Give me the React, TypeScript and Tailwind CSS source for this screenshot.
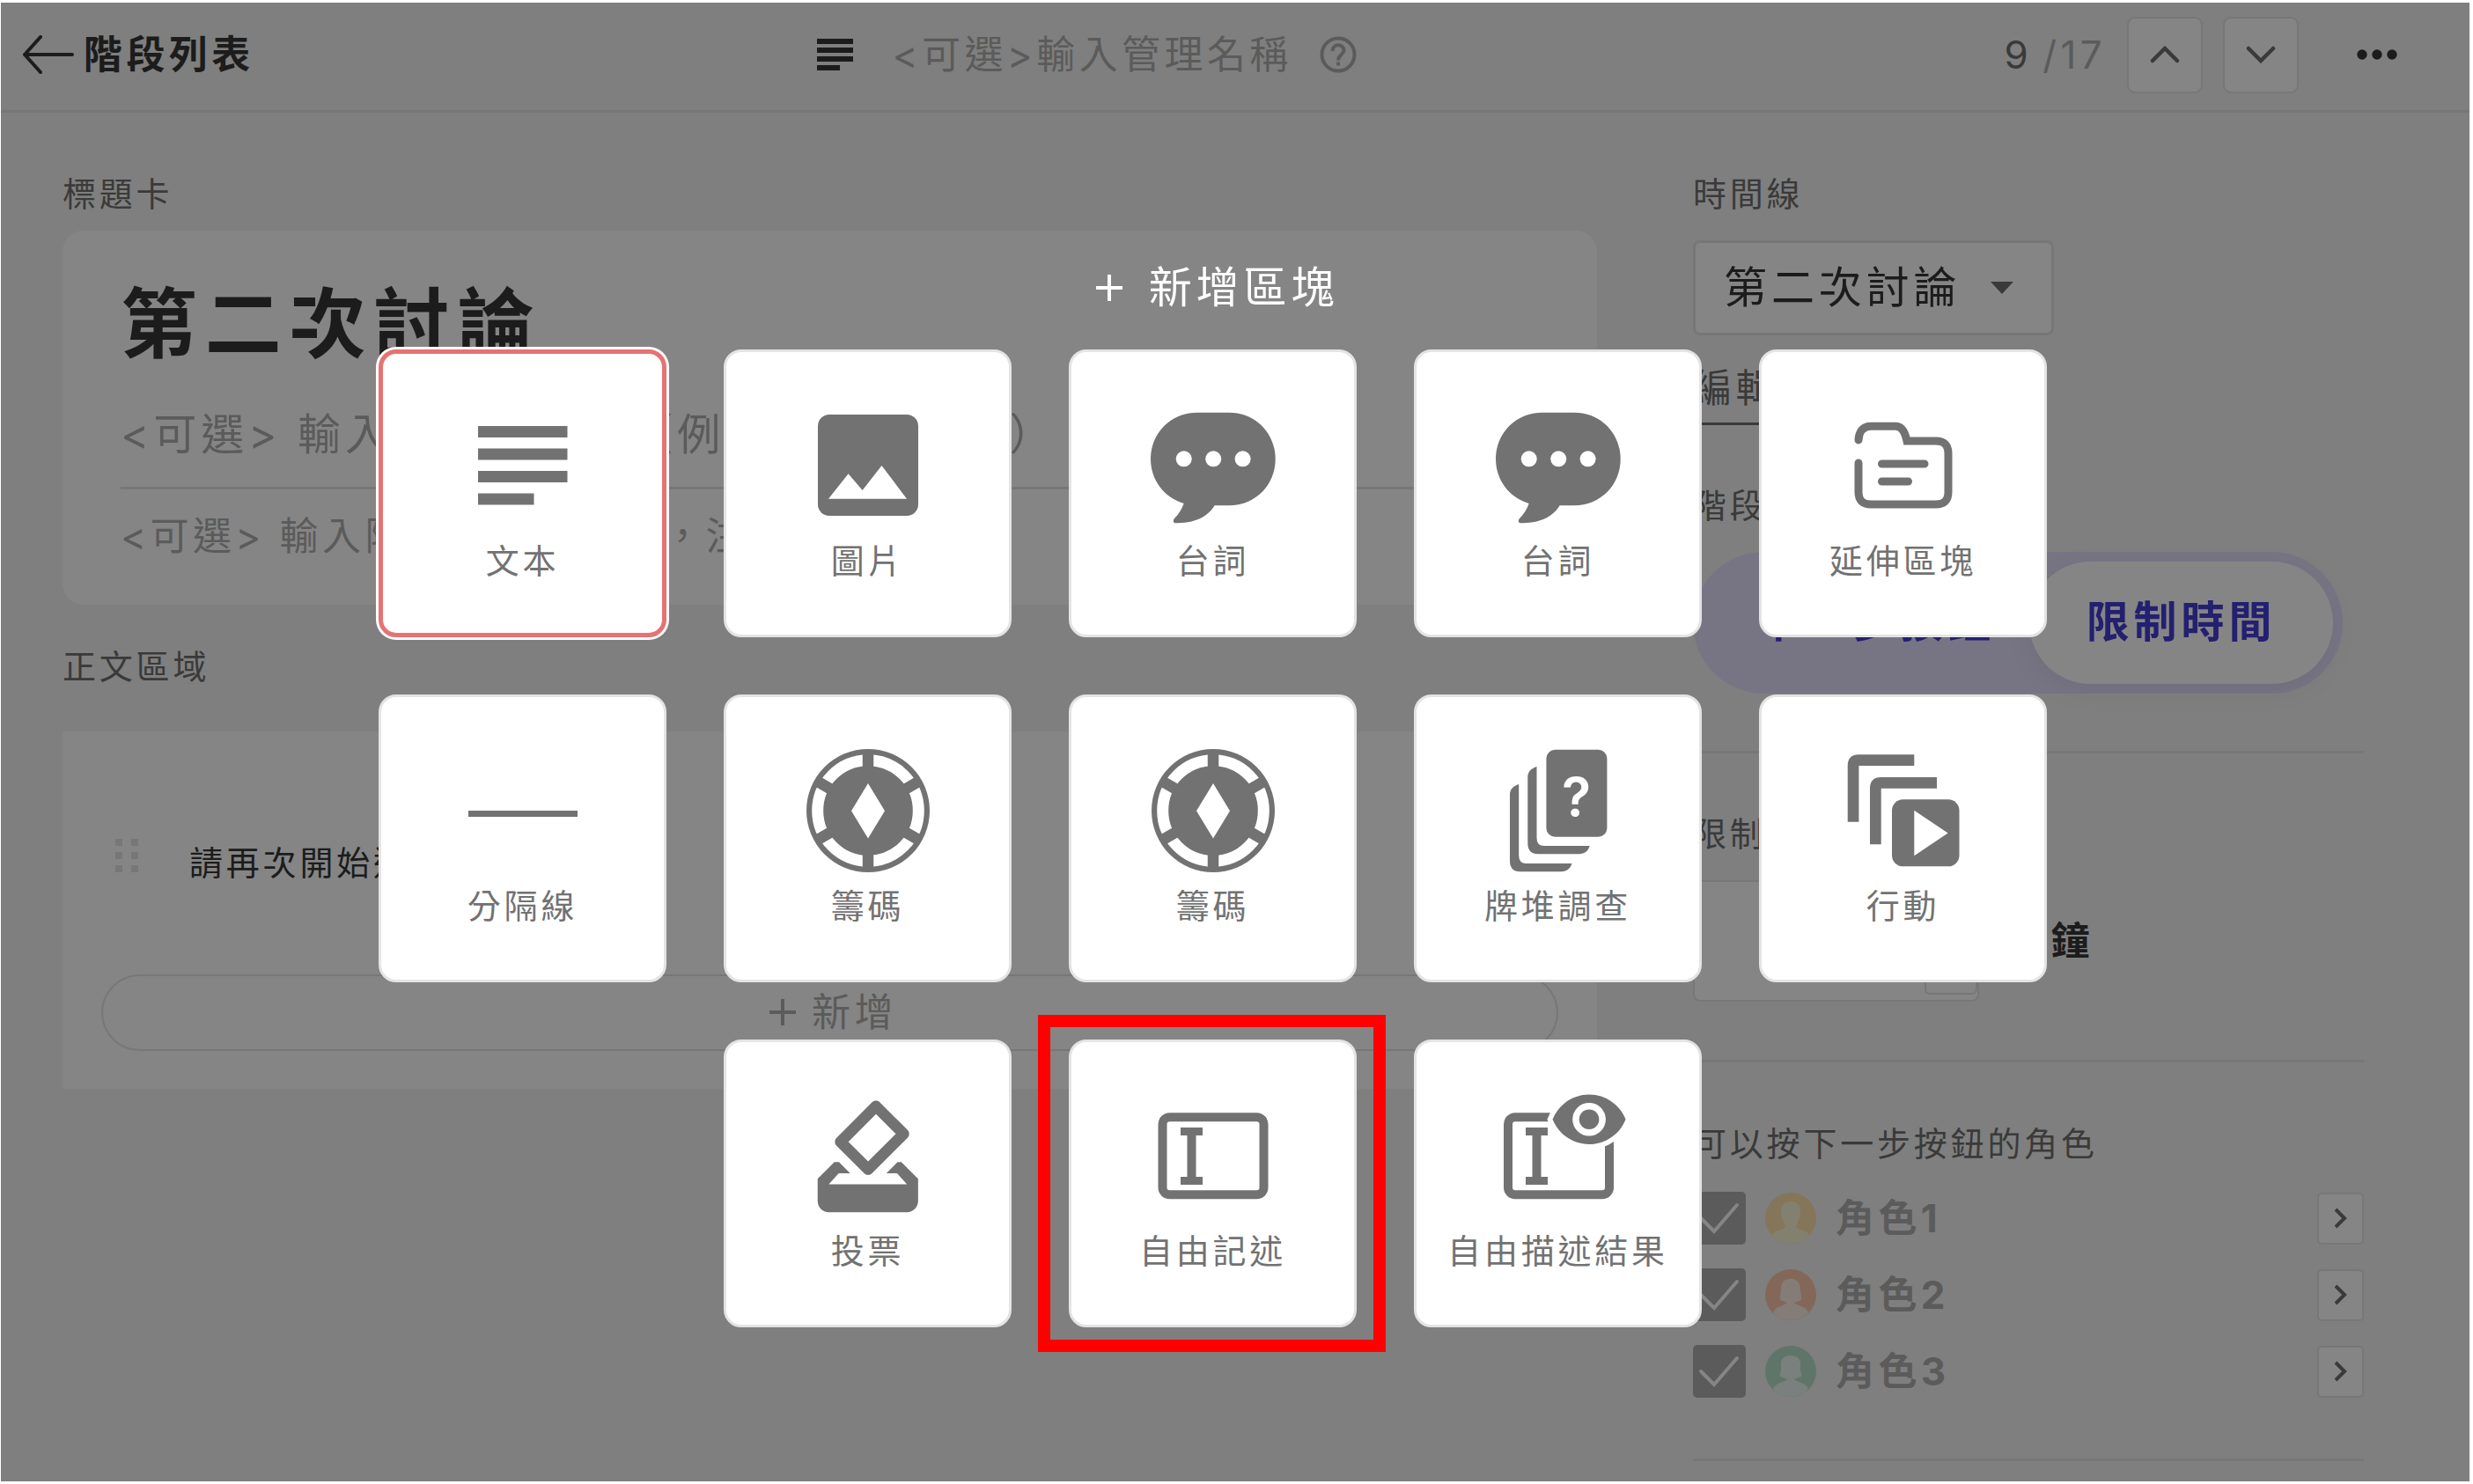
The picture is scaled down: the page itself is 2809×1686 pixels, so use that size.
import React from "react";

type IconProps = { children: React.ReactNode };

function BlockIcon({ children }: IconProps) {
  return (
    <svg viewBox="0 0 150 150" className="h-[150px] w-[150px] overflow-visible text-[#727272]" fill="currentColor" aria-hidden="true">
      {children}
    </svg>
  );
}

const TextIcon = () => (
  <BlockIcon>
    <rect x="24" y="30" width="101.5" height="13" />
    <rect x="24" y="55.5" width="101.5" height="13" />
    <rect x="24" y="81" width="101.5" height="13" />
    <rect x="24" y="106.5" width="63.5" height="13" />
  </BlockIcon>
);

const ImageIcon = () => (
  <BlockIcon>
    <rect x="18" y="17" width="114" height="115" rx="13" />
    <path d="M30 112.7 52.6 84.3 68.6 103 90.5 75 119 112.7Z" fill="#fff" />
  </BlockIcon>
);

const SpeechIcon = () => (
  <BlockIcon>
    <path d="M57 14.7H93C123 14.7 145.7 38 145.7 67.5S123 120.3 93 120.3H76.6C70 132 55 141 32 140.2C29.5 140 29 137.5 31 135C36 130 39 125 41.7 118C19 111 4 91 4 67.5C4 38 27 14.7 57 14.7Z" />
    <circle cx="41.7" cy="67.3" r="9" fill="#fff" />
    <circle cx="75.2" cy="67.3" r="9" fill="#fff" />
    <circle cx="108.6" cy="67.3" r="9" fill="#fff" />
  </BlockIcon>
);

const FolderIcon = () => (
  <BlockIcon>
    <g fill="none" stroke="currentColor" strokeWidth="9" strokeLinecap="round">
      <path d="M24 46C24.500 36 29 30.200 38 30.200H66C73 30.200 77 37 79 47H112Q126 47 126 61V105Q126 119 112 119H38Q24 119 24 105V72" />
      <path d="M50.500 73H99M50.500 93H80.500" />
    </g>
  </BlockIcon>
);

const LineIcon = () => (
  <BlockIcon>
    <rect x="13" y="75" width="124" height="7" />
  </BlockIcon>
);

const ChipIcon = () => (
  <BlockIcon>
    <circle cx="75" cy="75" r="70" />
    <circle cx="75" cy="75" r="57.300" fill="none" stroke="#fff" strokeWidth="13" />
    <g stroke="currentColor" strokeWidth="12.500">
      <path d="M75 8V142" />
      <path d="M75 8V142" transform="rotate(60 75 75)" />
      <path d="M75 8V142" transform="rotate(120 75 75)" />
    </g>
    <path d="M75 44 94 75.300 75 106.500 56 75.300Z" fill="#fff" />
  </BlockIcon>
);

const DeckIcon = () => (
  <BlockIcon>
    <rect x="61.400" y="5.700" width="69" height="99" rx="10" />
    <path d="M50.500 25C44 27 40.300 31 40.300 37V112Q40.300 124.300 52 124.300H99Q108 124 110.800 115H59Q50.500 115 50.500 106Z" />
    <path d="M30.200 45C23.700 47 20 51 20 57V132Q20 144.300 31.700 144.300H78.700Q87.700 144 90.500 135H38.700Q30.200 135 30.200 126Z" />
    <text x="95.500" y="80.500" textAnchor="middle" fill="#fff" fontSize="61" fontWeight="600" fontFamily="Inter, sans-serif" letterSpacing="0">
      ?
    </text>
  </BlockIcon>
);

const ActionIcon = () => (
  <BlockIcon>
    <path d="M11.700 87.700V24Q11.700 11.300 24.400 11.300H87.300V24H24.400V87.700Z" />
    <path d="M37 113.300V49.700Q37 37 49.700 37H113V49.700H49.700V113.300Z" />
    <rect x="62" y="62.300" width="76.500" height="76" rx="12.500" />
    <path d="M87.300 74.700V126.300L125.600 100.400Z" fill="#fff" />
  </BlockIcon>
);

const VoteIcon = () => (
  <BlockIcon>
    <path
      transform="translate(-1.3 -0.2) scale(6.34)"
      d="M18 13h-.68l-2 2h1.91L19 17H5l1.78-2h2.05l-2-2H6l-3 3v4c0 1.1.89 2 1.99 2H19c1.100 0 2-.89 2-2v-4l-3-3zm-1-5.050l-4.950 4.950-3.540-3.540 4.950-4.950L17 7.950zm-4.240-5.660L6.390 8.660c-.39.39-.39 1.020 0 1.410l4.950 4.950c.39.39 1.020.39 1.410 0l6.360-6.360c.39-.39.39-1.020 0-1.410L14.160 2.300c-.38-.4-1.010-.4-1.400-.01z"
    />
  </BlockIcon>
);

const Caret = () => (
  <path d="M38 43H63V52H55.500V99H63V108H38V99H45.500V52H38Z" />
);

const InputIcon = () => (
  <BlockIcon>
    <rect x="17.500" y="31.300" width="115" height="88" rx="8" fill="none" stroke="currentColor" strokeWidth="10" />
    <Caret />
  </BlockIcon>
);

const EYE =
  "M12 4.500C7 4.500 2.730 7.610 1 12c1.730 4.390 6 7.500 11 7.500s9.270-3.110 11-7.500c-1.730-4.390-6-7.500-11-7.500z";

const ResultIcon = () => (
  <BlockIcon>
    <rect x="18" y="31.300" width="115" height="88" rx="8" fill="none" stroke="currentColor" strokeWidth="10" />
    <g transform="translate(64.8 -11.5) scale(3.77)">
      <path d={EYE} fill="#fff" stroke="#fff" strokeWidth="3" />
      <path d={EYE} />
      <circle cx="12" cy="12" r="5" fill="#fff" />
      <circle cx="12" cy="12" r="3" />
    </g>
    <Caret />
  </BlockIcon>
);

type Block = { label: string; icon: () => React.ReactElement; selected?: boolean; marked?: boolean };

const BLOCKS: Block[] = [
  { label: "文本", icon: TextIcon, selected: true },
  { label: "圖片", icon: ImageIcon },
  { label: "台詞", icon: SpeechIcon },
  { label: "台詞", icon: SpeechIcon },
  { label: "延伸區塊", icon: FolderIcon },
  { label: "分隔線", icon: LineIcon },
  { label: "籌碼", icon: ChipIcon },
  { label: "籌碼", icon: ChipIcon },
  { label: "牌堆調查", icon: DeckIcon },
  { label: "行動", icon: ActionIcon },
  { label: "投票", icon: VoteIcon },
  { label: "自由記述", icon: InputIcon, marked: true },
  { label: "自由描述結果", icon: ResultIcon },
];

function BlockCard({ block }: { block: Block }) {
  const Icon = block.icon;
  return (
    <button
      type="button"
      className={
        block.selected
          ? "relative flex h-[327px] w-[327px] flex-col items-center rounded-[20px] border-[5px] border-[#e57373] bg-white pt-[52px] ring-[3px] ring-white"
          : "relative flex h-[327px] w-[327px] flex-col items-center rounded-[20px] border-[3px] border-[#e4e4e4] bg-white pt-[54px]"
      }
    >
      <Icon />
      <span className="mt-[5px] text-[38px] leading-[56px] tracking-widest whitespace-nowrap text-[#727272]">{block.label}</span>
      {block.marked && (
        <span className="pointer-events-none absolute -top-[31px] -right-9 -bottom-[31px] -left-[38px] border-[14px] border-[#ff0000]" />
      )}
    </button>
  );
}

const ROLES = [
  { name: "角色1", ring: "#85765a", body: "#82806f", head: "M29 10C37 10 41 16 40 23C39 31 36 35 35 39C36 42 50 43 50 49C45 55 38 58 29 58S13 55 8 49C8 43 22 42 23 39C22 35 19 31 18 23C17 16 21 10 29 10Z" },
  { name: "角色2", ring: "#836759", body: "#847c77", head: "M24 12C33 8 40 14 40 22C40 28 42 31 41 35L33 38C37 42 47 42 49 49C45 55 38 58 29 58S13 55 9 49C11 42 21 42 25 38L17 35C16 31 18 28 18 22C18 16 20 13 24 12Z" },
  { name: "角色3", ring: "#5f7569", body: "#7a807e", head: "M29 11C37 11 41 16 40 23C39 28 42 31 41 35L33 38C37 42 47 42 49 49C45 55 38 58 29 58S13 55 9 49C11 42 21 42 25 38L17 35C16 31 19 28 18 23C17 16 21 11 29 11Z" },
];

function RoleRow({ role, index }: { role: (typeof ROLES)[number]; index: number }) {
  const id = `role-${index}`;
  return (
    <li className="flex h-[60px] items-center">
      <span className="grid">
        <input
          id={id}
          type="checkbox"
          defaultChecked
          className="col-start-1 row-start-1 h-[60px] w-[60px] appearance-none rounded-[5px] bg-[#5b5b5b]"
        />
        <svg viewBox="0 0 60 60" className="pointer-events-none col-start-1 row-start-1 h-[60px] w-[60px]" fill="none" stroke="#858585" strokeWidth="4" strokeLinecap="round" aria-hidden="true">
          <path d="M9 30 24 45 50 15" />
        </svg>
      </span>
      <label htmlFor={id} className="flex items-center text-[44px] leading-[60px] font-bold tracking-widest text-[#5b5b5b]">
        <svg viewBox="0 0 58 58" className="mr-[22px] ml-[22px] h-[58px] w-[58px]" aria-hidden="true">
          <clipPath id={`${id}-clip`}>
            <circle cx="29" cy="29" r="29" />
          </clipPath>
          <g clipPath={`url(#${id}-clip)`}>
            <rect width="58" height="58" fill={role.ring} />
            <path d={role.head} fill={role.body} />
          </g>
        </svg>
        {role.name}
      </label>
      <button type="button" aria-label={role.name} className="ml-auto grid h-[59px] w-[53px] place-items-center rounded-[5px] border-2 border-[#777] bg-[#858585]">
        <svg viewBox="0 0 16 24" className="h-6 w-4" fill="none" stroke="#3a3a3a" strokeWidth="4" aria-hidden="true">
          <path d="M2 2 12 12 2 22" />
        </svg>
      </button>
    </li>
  );
}

const squareButton = "grid h-[87px] w-[86px] place-items-center rounded-[9px] border-2 border-[#777] bg-[#858585]";
const sectionLabel = "text-[38px] leading-[56px] tracking-widest text-[#3a3a3a]";

export default function App() {
  return (
    <div className="relative min-h-screen bg-white pt-[3px] pr-1 pb-[3px] pl-px font-['Inter','Noto_Sans_CJK_TC',sans-serif]">
      <div className="min-h-[calc(100vh-6px)] bg-[#7f7f7f]">
        <header className="flex h-[125px] items-center border-b-[3px] border-[#777] pr-[82px] pb-1">
          <div className="flex w-[34%] shrink-0 items-center pl-6">
            <a href="#stages" className="flex items-center gap-[10px] text-[44px] leading-[60px] font-bold tracking-widest text-[#1c1c1c]">
              <svg viewBox="0 0 60 44" className="h-11 w-[60px]" fill="none" stroke="currentColor" strokeWidth="4" strokeLinecap="round" strokeLinejoin="round" aria-hidden="true">
                <path d="M57 22H3M21 2 3 22 21 42" />
              </svg>
              階段列表
            </a>
          </div>
          <svg viewBox="0 0 44 36" className="h-9 w-11 shrink-0" fill="#1c1c1c" aria-hidden="true">
            <path d="M2 0H43V6H2ZM2 10H43V16H2ZM2 20H43V26H2ZM2 30H28V36H2Z" />
          </svg>
          <input
            aria-label="管理名稱"
            placeholder="<可選>輸入管理名稱"
            className="ml-[43px] h-[60px] w-[486px] shrink-0 text-[44px] tracking-widest placeholder:text-[#5b5b5b]"
          />
          <button type="button" aria-label="說明" className="h-[42px] w-[42px] shrink-0 text-[#5b5b5b]">
            <svg viewBox="0 0 42 42" className="h-[42px] w-[42px]" fill="none" stroke="currentColor" strokeWidth="4" aria-hidden="true">
              <circle cx="21" cy="21" r="18.500" />
              <path d="M14.500 17C14.500 8 27.500 8.500 27.500 16C27.500 21 21 21 21 27.500" />
              <path d="M21 29.500V33.500" />
            </svg>
          </button>
          <div className="ml-auto flex items-center text-[44px] leading-[60px] tracking-widest">
            <span className="text-[#3a3a3a]">9</span>
            <span className="ml-3 text-[#5b5b5b]">/17</span>
            <button type="button" aria-label="上一個" className={`${squareButton} ml-6`}>
              <svg viewBox="0 0 34 20" className="h-5 w-[34px]" fill="none" stroke="#3a3a3a" strokeWidth="4.500" strokeLinecap="round" aria-hidden="true">
                <path d="M3 17 17 3 31 17" />
              </svg>
            </button>
            <button type="button" aria-label="下一個" className={`${squareButton} ml-[23px]`}>
              <svg viewBox="0 0 34 20" className="h-5 w-[34px]" fill="none" stroke="#3a3a3a" strokeWidth="4.500" strokeLinecap="round" aria-hidden="true">
                <path d="M3 3 17 17 31 3" />
              </svg>
            </button>
            <button type="button" aria-label="更多" className="ml-[66px]">
              <svg viewBox="0 0 46 12" className="h-3 w-[46px]" fill="#1c1c1c" aria-hidden="true">
                <circle cx="6" cy="6" r="5.700" />
                <circle cx="23" cy="6" r="5.700" />
                <circle cx="40" cy="6" r="5.700" />
              </svg>
            </button>
          </div>
        </header>

        <main className="flex gap-[109px] pt-16 pr-[120px] pb-5 pl-[70px]">
          <div className="min-w-0 flex-1">
            <h2 className={sectionLabel}>標題卡</h2>
            <section className="mt-[14px] rounded-[24px] bg-[#858585] px-[66px] pt-[47px] pb-[42px]">
              <input aria-label="標題" defaultValue="第二次討論" className="block h-[120px] w-full text-[87px] font-bold tracking-widest text-[#1c1c1c]" />
              <input
                aria-label="副標題"
                placeholder="<可選> 輸入副標題文字（例：第一次討論）"
                className="mt-[29px] block h-[72px] w-full text-[49px] tracking-widest placeholder:text-[#5b5b5b]"
              />
              <hr className="mt-[23px] border-t-[3px] border-[#777]" />
              <input
                aria-label="附加說明"
                placeholder="<可選> 輸入附加說明文字等，注意事項"
                className="mt-[17px] block h-[72px] w-full text-[44px] tracking-widest placeholder:text-[#5b5b5b]"
              />
            </section>

            <h2 className={`${sectionLabel} mt-[42px]`}>正文區域</h2>
            <section className="mt-[46px] bg-[#858585] px-11 pt-[121px] pb-[43px]">
              <div className="flex items-center pl-4">
                <svg viewBox="0 0 26 38" className="mr-[58px] mb-4 h-[38px] w-[26px]" fill="#777" aria-hidden="true">
                  <path d="M0 0H8V8H0ZM18 0H26V8H18ZM0 15H8V23H0ZM18 15H26V23H18ZM0 30H8V38H0ZM18 30H26V38H18Z" />
                </svg>
                <p className="text-[38px] leading-[56px] tracking-widest text-[#1c1c1c]">請再次開始進行討論</p>
              </div>
              <button type="button" className="mt-[99px] flex h-[87px] w-full items-center justify-center gap-[18px] rounded-full border-2 border-[#777] pb-0.5 pl-2 text-[44px] leading-[60px] tracking-widest text-[#5b5b5b]">
                <svg viewBox="0 0 30 30" className="h-[30px] w-[30px]" stroke="currentColor" strokeWidth="4" aria-hidden="true">
                  <path d="M15 0V30M0 15H30" />
                </svg>
                新增
              </button>
            </section>
          </div>

          <aside className="w-[762px]">
            <label htmlFor="timeline" className={`${sectionLabel} block`}>時間線</label>
            <div className="mt-[25px] grid w-[410px] items-center">
              <select
                id="timeline"
                className="col-start-1 row-start-1 h-[108px] appearance-none rounded-lg border-[3px] border-[#777] bg-[#858585] pl-8 text-[49px] tracking-widest text-[#1c1c1c]"
              >
                <option>第二次討論</option>
              </select>
              <svg viewBox="0 0 26 14" className="pointer-events-none col-start-1 row-start-1 mr-[46px] h-[14px] w-[26px] justify-self-end" fill="#3a3a3a" aria-hidden="true">
                <path d="M0 0H26L13 14Z" />
              </svg>
            </div>
            <a href="#timeline" className="mt-8 block w-max border-b-[3px] border-[#3a3a3a] pb-[11px] text-[44px] leading-[56px] tracking-widest text-[#3a3a3a]">
              編輯時間線
            </a>

            <h3 className={`${sectionLabel} mt-[63px]`}>階段推進方式</h3>
            <div className="mt-[25px] flex h-[161px] w-[738px] rounded-full bg-[#777583] p-[11px] text-[49px] font-bold text-[#232070]">
              <button type="button" aria-pressed="false" className="flex-1 rounded-full pb-0.5 pl-6 tracking-widest">下一步按鈕</button>
              <button type="button" aria-pressed="true" className="w-[345px] rounded-full bg-[#858585] pb-0.5 tracking-widest shadow-[0_8px_32px_rgba(0,0,0,0.06)]">限制時間</button>
            </div>

            <hr className="mt-[65px] border-t-[3px] border-[#777]" />
            <label htmlFor="limit" className={`${sectionLabel} mt-[63px] block`}>限制時間</label>
            <div className="mt-[25px] flex items-center">
              <div className="flex h-[138px] w-[325px] justify-end rounded-lg border-2 border-[#777] bg-[#858585] py-[6px]">
                <input id="limit" defaultValue="10" className="min-w-0 flex-1 pl-[90px] text-[49px] text-[#1c1c1c]" />
                <span className="w-[60px] rounded-md border-2 border-[#777]" />
              </div>
              <span className="ml-[33px] text-[44px] leading-[60px] font-bold tracking-widest text-[#1c1c1c]">分鐘</span>
            </div>

            <hr className="mt-[66px] border-t-[3px] border-[#777]" />
            <h3 className={`${sectionLabel} mt-16`}>可以按下一步按鈕的角色</h3>
            <ul className="mt-[27px] flex flex-col gap-[27px]">
              {ROLES.map((role, index) => (
                <RoleRow key={role.name} role={role} index={index} />
              ))}
            </ul>
            <hr className="mt-[69px] border-t-[3px] border-[#777]" />
          </aside>
        </main>
      </div>

      <div role="dialog" aria-label="新增區塊" className="absolute inset-0 flex flex-col items-center pt-[291px] pr-[54px]">
        <h1 className="mb-[34px] flex items-center gap-[30px] pl-[10px] text-[49px] leading-[72px] tracking-widest text-white">
          <svg viewBox="0 0 30 30" className="h-[30px] w-[30px]" stroke="currentColor" strokeWidth="4" aria-hidden="true">
            <path d="M15 0V30M0 15H30" />
          </svg>
          新增區塊
        </h1>
        <div className="flex max-w-[1895px] flex-wrap justify-center gap-[65px]">
          {BLOCKS.map((block, index) => (
            <BlockCard key={index} block={block} />
          ))}
        </div>
      </div>
    </div>
  );
}
